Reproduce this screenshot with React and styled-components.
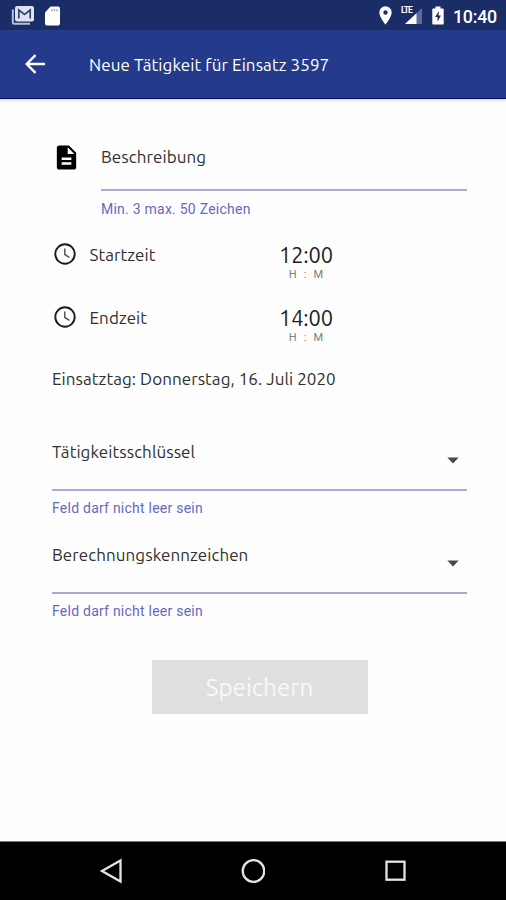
import React from "react";
import styled, { createGlobalStyle } from "styled-components";

const GlobalStyle = createGlobalStyle`
  *, *::before, *::after { box-sizing: border-box; }
  body { margin: 0; background: #fff; }
`;

const Screen = styled.div`
  width: 506px;
  height: 900px;
  display: flex;
  flex-direction: column;
  overflow: hidden;
  background: #fefefe;
  color: #303030;
  font-family: Ubuntu, "Noto Sans", sans-serif;
`;

const StatusBar = styled.header`
  height: 30px;
  flex: none;
  display: flex;
  align-items: center;
  padding: 0 9px 0 11px;
  background: #1b2d66;
  color: #fff;
`;

const StatusIcons = styled.div`
  display: flex;
  align-items: center;
  gap: 9px;
`;

const Spacer = styled.div`
  flex: 1;
`;

const Clock = styled.span`
  margin-left: 9px;
  font: 500 17.8px/30px Roboto, sans-serif;
  letter-spacing: -0.2px;
  padding-top: 3px;
`;

const AppBar = styled.div`
  height: 69px;
  flex: none;
  display: flex;
  align-items: center;
  gap: 43px;
  padding: 0 25px;
  background: #233b8a;
  border-bottom: 1px solid #08086c;
  box-shadow: 0 1px 3px rgba(40, 70, 60, 0.25);
  color: #fff;
`;

const Title = styled.h1`
  margin: 0;
  padding-top: 1px;
  font-size: 17px;
  line-height: 24px;
  font-weight: 400;
  letter-spacing: 0.08px;
  white-space: nowrap;
`;

const Form = styled.main`
  flex: 1;
  min-height: 0;
  display: flex;
  flex-direction: column;
  padding: 44px 39px 0 52px;
`;

const Description = styled.div`
  display: grid;
  grid-template-columns: 49px 1fr;
  height: 92px;
`;

const Label = styled.span`
  font-size: 17px;
  line-height: 28px;
  letter-spacing: 0.07px;
  white-space: nowrap;
`;

const Field = styled.div`
  display: flex;
  flex-direction: column;
`;

const InputRow = styled.div`
  height: ${(p) => p.$height}px;
  display: flex;
  justify-content: space-between;
  border-bottom: 2px solid #a9aad8;
`;

const Helper = styled.span`
  margin-top: ${(p) => p.$offset}px;
  font: 400 14px/20px Roboto, sans-serif;
  letter-spacing: 0.24px;
  color: #6669c0;
  white-space: nowrap;
`;

const TimeRow = styled.div`
  height: 63px;
  display: grid;
  grid-template-columns: 37px 189px 56px;
  align-items: start;
`;

const TimeValue = styled.div`
  display: flex;
  flex-direction: column;
  align-items: center;
  padding-top: 8px;
`;

const Time = styled.span`
  font-size: 21.8px;
  line-height: 24px;
  letter-spacing: -0.1px;
  color: #1d1d1d;
`;

const Units = styled.span`
  font: 400 11px/14px Roboto, sans-serif;
  letter-spacing: 2.2px;
  padding: 1px 0 0 2px;
  color: #7c7c7c;
`;

const TimeLabel = styled(Label)`
  padding: 6px 0 0 0.5px;
`;

const DayLine = styled.div`
  height: 77px;
  display: flex;
  padding-top: 4px;
`;

const SelectField = styled(Field)`
  height: ${(p) => p.$height}px;
`;

const SaveButton = styled.button`
  align-self: center;
  width: 216px;
  height: 54px;
  margin: 15px 0 0 0;
  padding: 0;
  border: 0;
  background: #dfdfdf;
  color: #f8f8f8;
  font: 400 24.2px/54px Ubuntu, "Noto Sans", sans-serif;
`;

const NavBar = styled.nav`
  height: 59px;
  flex: none;
  display: flex;
  align-items: center;
  gap: 118px;
  padding-left: 99px;
  border-top: 1px solid #777;
  background: #000;
`;

const Icon = styled.svg`
  display: block;
  flex: none;
  margin: ${(p) => p.$margin || "0"};
`;

const MailIcon = () => (
  <Icon width="24" height="22" viewBox="0 0 24 22">
    <path d="M1.800 5.500v13q0 1.300 1.300 1.300H19" fill="none" stroke="#b9c0d6" strokeWidth="2" />
    <rect x="4" y="2" width="19" height="15.500" rx="2" fill="#dfe3ee" />
    <path d="M7.800 14.500V6l5.700 4.500L19.200 6v8.500" fill="none" stroke="#34436f" strokeWidth="1.700" />
  </Icon>
);

const SdIcon = () => (
  <Icon width="17" height="20" viewBox="0 0 17 20" $margin="1px 0 0 0">
    <path d="M6.500.500H14q2 0 2 2v15q0 2-2 2H3q-2 0-2-2V6.500z" fill="#fff" />
    <path d="M8 3.300v2M10.500 3.300v2M13 3.300v2" stroke="#8f99b8" strokeWidth="1.300" />
  </Icon>
);

const PinIcon = () => (
  <Icon width="13" height="19" viewBox="0 0 13 19" $margin="1px 0 0 0">
    <path fillRule="evenodd" fill="#fff" d="M6.500.3A6.200 6.200 0 0 0 .3 6.500C.3 11 6.500 18.500 6.500 18.500S12.700 11 12.700 6.500A6.200 6.200 0 0 0 6.500.3m0 4a2.200 2.200 0 1 1 0 4.400 2.200 2.200 0 0 1 0-4.400" />
  </Icon>
);

const SignalBox = styled.div`
  position: relative;
  width: 22px;
  height: 20px;
`;

const Lte = styled.span`
  position: absolute;
  left: 0;
  top: 1px;
  font: 700 8.5px/9px Roboto, sans-serif;
  letter-spacing: -0.9px;
`;

const SignalIcon = () => (
  <SignalBox>
    <Icon width="22" height="20" viewBox="0 0 22 20">
      <path d="M21 3v16H4z" fill="#5d6b96" />
      <path d="M15.500 8.200V19H4z" fill="#fff" />
    </Icon>
    <Lte>LTE</Lte>
  </SignalBox>
);

const BatteryIcon = () => (
  <Icon width="12" height="19" viewBox="0 0 12 19">
    <path d="M3.500.500h5v2H11q.7 0 .7.700v14.600q0 .7-.7.700H1q-.7 0-.7-.7V3.200q0-.7.7-.7h2.500z" fill="#fff" />
    <path d="M7 5 3 11h2.500v4.500L9 9.500H6.500z" fill="#1b2d66" />
  </Icon>
);

const BackIcon = () => (
  <Icon width="21" height="20" viewBox="0 0 21 20">
    <path d="M20 10H2M10.500 1.200 1.700 10l8.800 8.800" fill="none" stroke="#fff" strokeWidth="2.400" />
  </Icon>
);

const DocumentIcon = () => (
  <Icon width="29" height="29" viewBox="0 0 24 24">
    <path fill="#000" d="M14 2H6c-1.100 0-2 .9-2 2v16c0 1.100.9 2 2 2h12c1.100 0 2-.9 2-2V8zm2 16H8v-2h8zm0-4H8v-2h8zm-3-5V3.500L18.500 9z" />
  </Icon>
);

const ClockIcon = () => (
  <Icon width="26" height="26" viewBox="0 0 26 26" $margin="6px 0 0 0" fill="none">
    <circle cx="13" cy="13" r="9.700" stroke="#1c1c1c" strokeWidth="1.900" />
    <path d="M12.800 7.500v6l4.600 2.800" stroke="#555" strokeWidth="1.500" />
  </Icon>
);

const CaretIcon = () => (
  <Icon width="12" height="7" viewBox="0 0 12 7" $margin="19px 8px 0 0">
    <path d="M.3.500h11.400L6 6.500z" fill="#484848" />
  </Icon>
);

const NavIcon = ({ children }) => (
  <Icon width="24" height="26" viewBox="0 0 24 26" fill="none" stroke="#e4e4e4" strokeWidth="2.300">
    {children}
  </Icon>
);

const TimeEntry = ({ label, value }) => (
  <TimeRow>
    <ClockIcon />
    <TimeLabel>{label}</TimeLabel>
    <TimeValue>
      <Time>{value}</Time>
      <Units>H : M</Units>
    </TimeValue>
  </TimeRow>
);

const Select = ({ label, height }) => (
  <SelectField $height={height}>
    <InputRow $height={53}>
      <Label>{label}</Label>
      <CaretIcon />
    </InputRow>
    <Helper $offset={7}>Feld darf nicht leer sein</Helper>
  </SelectField>
);

export default function App() {
  return (
    <>
      <GlobalStyle />
      <Screen>
        <StatusBar>
          <StatusIcons>
            <MailIcon />
            <SdIcon />
          </StatusIcons>
          <Spacer />
          <StatusIcons>
            <PinIcon />
            <SignalIcon />
            <BatteryIcon />
          </StatusIcons>
          <Clock>10:40</Clock>
        </StatusBar>
        <AppBar>
          <BackIcon />
          <Title>Neue Tätigkeit für Einsatz 3597</Title>
        </AppBar>
        <Form>
          <Description>
            <DocumentIcon />
            <Field>
              <InputRow $height={48}>
                <Label>Beschreibung</Label>
              </InputRow>
              <Helper $offset={8}>Min. 3 max. 50 Zeichen</Helper>
            </Field>
          </Description>
          <TimeEntry label="Startzeit" value="12:00" />
          <TimeEntry label="Endzeit" value="14:00" />
          <DayLine>
            <Label>Einsatztag: Donnerstag, 16. Juli 2020</Label>
          </DayLine>
          <Select label="Tätigkeitsschlüssel" height={103} />
          <Select label="Berechnungskennzeichen" height={104} />
          <SaveButton>Speichern</SaveButton>
        </Form>
        <NavBar>
          <NavIcon><path d="M21.500 2.500v21L3 13z" /></NavIcon>
          <NavIcon><circle cx="12.500" cy="13" r="10.800" /></NavIcon>
          <NavIcon><rect x="3.500" y="3.700" width="18" height="18" /></NavIcon>
        </NavBar>
      </Screen>
    </>
  );
}
